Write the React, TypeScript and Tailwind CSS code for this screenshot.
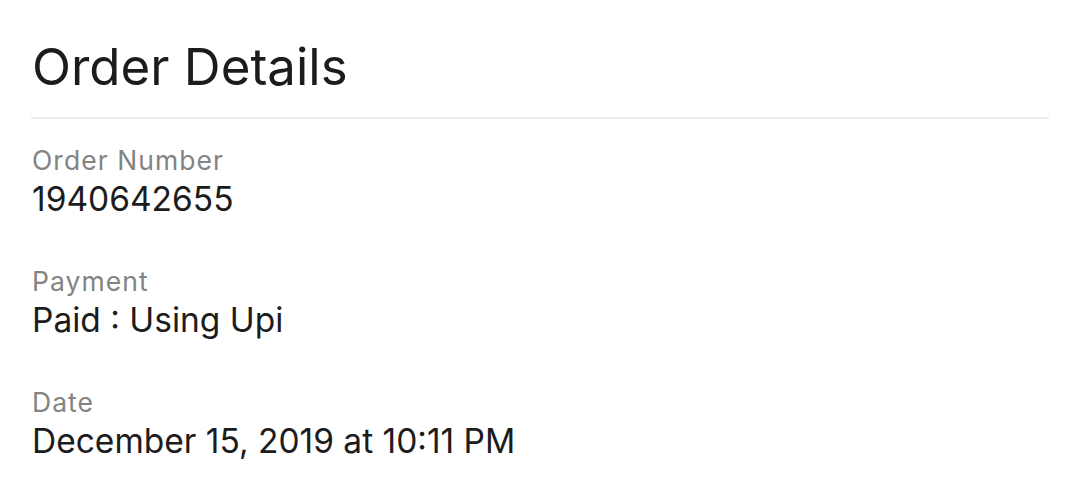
export default function App() {
  const rows = [
    { label: 'Order Number', value: '1940642655' },
    { label: 'Payment', value: 'Paid : Using Upi' },
    { label: 'Date', value: 'December 15, 2019 at 10:11 PM' },
  ];
  return (
    <div className="w-[1080px] h-[501px] bg-white px-[31px] font-['Inter',sans-serif]">
      <h1 className="pt-[36px] pl-[1px] text-[51px] leading-[62px] text-[#1c1c1c] font-normal">Order Details</h1>
      <div className="mt-[19px] h-[2px] bg-[#ececec]" />
      <div className="flex flex-col gap-[43px] pt-[24px] pl-[1px]">
        {rows.map((r) => (
          <div key={r.label} className="flex flex-col">
            <span className="text-[26.5px] leading-[34px] tracking-[0.04em] text-[#838383]">{r.label}</span>
            <span className="text-[33.5px] leading-[44px] text-[#1c1c1c]">{r.value}</span>
          </div>
        ))}
      </div>
    </div>
  );
}
